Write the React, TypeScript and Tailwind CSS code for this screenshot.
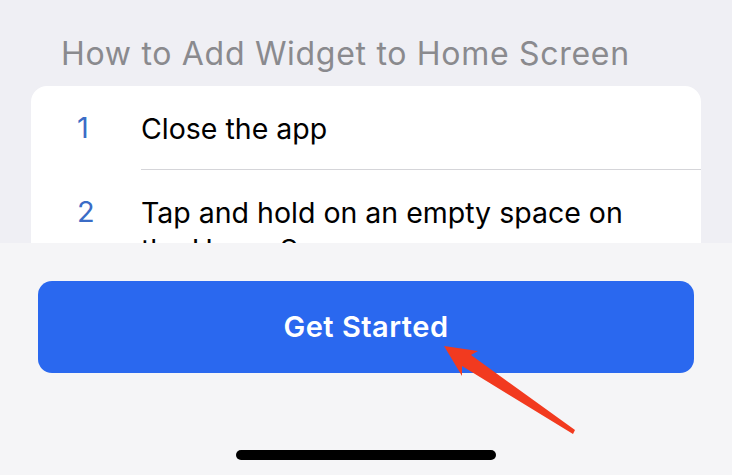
import React from 'react';

const steps = [
  { n: 1, text: 'Close the app' },
  { n: 2, text: 'Tap and hold on an empty space on the Home Screen' },
  { n: 3, text: 'Tap the plus button in the top left corner' },
];

export default function App() {
  return (
    <div className="relative w-[732px] h-[475px] overflow-hidden bg-[#efeff4] font-['Inter',sans-serif]">
      {/* Scrolling content, clipped by the bottom sheet */}
      <div className="h-[243px] overflow-hidden px-[31px] pt-[35px]">
        <h2 className="pl-[30px] text-[32px] leading-[38px] text-[#8a8a8e] tracking-[0.7px]">
          How to Add Widget to Home Screen
        </h2>
        <div className="mt-[13px] rounded-[16px] bg-white">
          {steps.map((s, i) => (
            <div key={s.n} className="flex">
              <span className="w-[110px] shrink-0 pl-[46px] pt-[24px] text-[29px] leading-[36px] text-[#3b6cc6]">
                {s.n}
              </span>
              <div
                className={`flex-1 pr-[40px] pt-[24px] pb-[22px] text-[28.5px] leading-[37px] text-black ${
                  i < steps.length - 1 ? 'border-b border-[#d5d5d9]' : ''
                }`}
              >
                {s.text}
              </div>
            </div>
          ))}
        </div>
      </div>

      {/* Bottom sheet */}
      <div className="h-[232px] bg-[#f5f5f7] pt-[38px]">
        <button className="mx-[38px] flex h-[92px] w-[656px] items-center justify-center rounded-[14px] bg-[#2a68ef] text-[29px] font-semibold tracking-[0.5px] text-white">
          Get Started
        </button>
        <div className="mx-auto mt-[77px] h-[10px] w-[260px] rounded-full bg-black" />
      </div>

      {/* Annotation arrow */}
      <svg
        className="pointer-events-none absolute left-0 top-0"
        width="732"
        height="475"
        viewBox="0 0 732 475"
      >
        <polygon
          points="444,346 478,351 471,355 575,430 573,434 462,366 462,376"
          fill="#f23a1f"
        />
      </svg>
    </div>
  );
}
